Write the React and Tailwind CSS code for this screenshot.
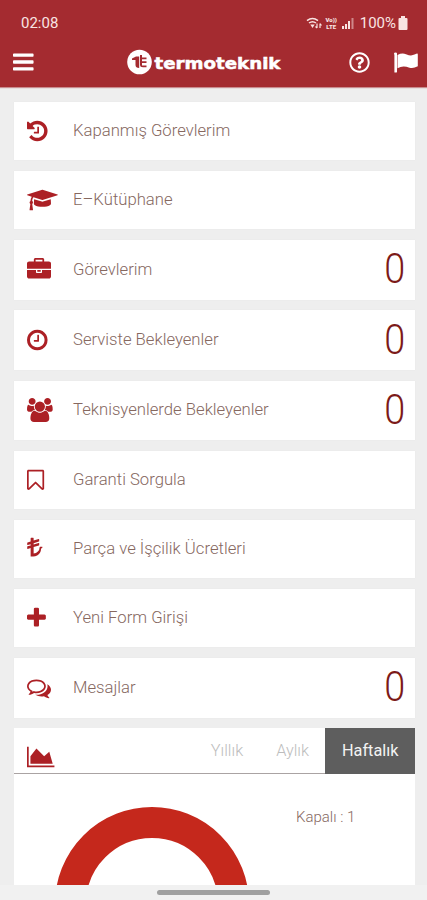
import React, { useState } from "react";
import { FaRegQuestionCircle } from "react-icons/fa";

// width is the glyph's advance, every icon is 1792 units high
const ICONS = {
  bars: {
    width: 1536,
    minX: 128,
    d: "M1664 1344v128q0 26-19 45t-45 19h-1408q-26 0-45-19t-19-45v-128q0-26 19-45t45-19h1408q26 0 45 19t19 45zm0-512v128q0 26-19 45t-45 19h-1408q-26 0-45-19t-19-45v-128q0-26 19-45t45-19h1408q26 0 45 19t19 45zm0-512v128q0 26-19 45t-45 19h-1408q-26 0-45-19t-19-45v-128q0-26 19-45t45-19h1408q26 0 45 19t19 45z",
  },
  history: {
    width: 1536,
    minX: 128,
    d: "M1664 896q0 156-61 298t-164 245-245 164-298 61q-172 0-327-72.5t-264-204.5q-7-10-6.5-22.5t8.5-20.5l137-138q10-9 25-9 16 2 23 12 73 95 179 147t225 52q104 0 198.5-40.5t163.5-109.5 109.5-163.5 40.5-198.5-40.5-198.5-109.5-163.5-163.5-109.5-198.5-40.5q-98 0-188 35.5t-160 101.5l137 138q31 30 14 69-17 40-59 40h-448q-26 0-45-19t-19-45v-448q0-42 40-59 39-17 69 14l130 129q107-101 244.5-156.5t284.5-55.5q156 0 298 61t245 164 164 245 61 298zm-640-288v448q0 14-9 23t-23 9h-320q-14 0-23-9t-9-23v-64q0-14 9-23t23-9h224v-352q0-14 9-23t23-9h64q14 0 23 9t9 23z",
  },
  graduation: {
    width: 2304,
    minX: 0,
    d: "M1774 836l18 316q4 69-82 128t-235 93.5-323 34.5-323-34.5-235-93.5-82-128l18-316 574 181q22 7 48 7t48-7zm530-324q0 23-22 31l-1120 352q-4 1-10 1t-10-1l-652-206q-43 34-71 111.5t-34 178.5q63 36 63 109 0 69-58 107l58 433q2 14-8 25-9 11-24 11h-192q-15 0-24-11-10-11-8-25l58-433q-58-38-58-107 0-73 65-111 11-207 98-330l-333-104q-22-8-22-31t22-31l1120-352q4-1 10-1t10 1l1120 352q22 8 22 31z",
  },
  briefcase: {
    width: 1792,
    minX: 0,
    d: "M640 256h512v-128h-512v128zm1152 640v480q0 66-47 113t-113 47h-1472q-66 0-113-47t-47-113v-480h672v160q0 26 19 45t45 19h320q26 0 45-19t19-45v-160h672zm-768 0v128h-256v-128h256zm768-480v384h-1792v-384q0-66 47-113t113-47h352v-160q0-40 28-68t68-28h576q40 0 68 28t28 68v160h352q66 0 113 47t47 113z",
  },
  clock: {
    width: 1536,
    minX: 128,
    d: "M1024 544v448q0 14-9 23t-23 9h-320q-14 0-23-9t-9-23v-64q0-14 9-23t23-9h224v-352q0-14 9-23t23-9h64q14 0 23 9t9 23zm416 352q0-148-73-273t-198-198-273-73-273 73-198 198-73 273 73 273 198 198 273 73 273-73 198-198 73-273zm224 0q0 209-103 385.5t-279.5 279.5-385.5 103-385.5-103-279.5-279.5-103-385.5 103-385.5 279.5-279.5 385.5-103 385.5 103 279.5 279.5 103 385.5z",
  },
  users: {
    width: 1920,
    minX: 0,
    d: "M593 896q-162 5-265 128h-134q-82 0-138-40.5t-56-118.5q0-353 124-353 6 0 43.5 21t97.5 42.5 119 21.5q67 0 133-23-5 37-5 66 0 139 81 256zm1071 637q0 120-73 189.5t-194 69.5h-874q-121 0-194-69.5t-73-189.5q0-53 3.5-103.5t14-109 26.5-108.5 43-97.5 62-81 85.5-53.5 111.5-20q10 0 43 21.5t73 48 107 48 135 21.5 135-21.5 107-48 73-48 43-21.5q61 0 111.5 20t85.5 53.5 62 81 43 97.5 26.5 108.5 14 109 3.5 103.5zm-1024-1277q0 106-75 181t-181 75-181-75-75-181 75-181 181-75 181 75 75 181zm704 384q0 159-112.5 271.5t-271.5 112.5-271.5-112.5-112.5-271.5 112.5-271.5 271.5-112.5 271.5 112.5 112.5 271.5zm576 225q0 78-56 118.5t-138 40.5h-134q-103-123-265-128 81-117 81-256 0-29-5-66 66 23 133 23 59 0 119-21.5t97.5-42.5 43.5-21q124 0 124 353zm-128-609q0 106-75 181t-181 75-181-75-75-181 75-181 181-75 181 75 75 181z",
  },
  bookmark: {
    width: 1280,
    minX: 256,
    d: "M1408 256h-1024v1242l423-406 89-85 89 85 423 406v-1242zm12-128q23 0 44 9 33 13 52.5 41t19.5 62v1289q0 34-19.5 62t-52.5 41q-19 8-44 8-48 0-83-32l-441-424-441 424q-36 33-83 33-23 0-44-9-33-13-52.5-41t-19.5-62v-1289q0-34 19.5-62t52.5-41q21-9 44-9h1048z",
  },
  lira: {
    width: 1152,
    minX: 80,
    d: "M1130 880q0 159-78 294t-213.5 213-294.5 78h-160q-14 0-23-9t-9-23v-611l-215 66q-3 1-9 1-10 0-19-6-13-10-13-26v-128q0-23 23-31l233-71v-93l-215 66q-3 1-9 1-10 0-19-6-13-10-13-26v-128q0-23 23-31l233-71v-250q0-14 9-23t23-9h160q14 0 23 9t9 23v181l375-116q15-5 28 5t13 26v128q0 23-23 31l-393 121v93l375-116q15-5 28 5t13 26v128q0 23-23 31l-393 121v487q188-13 318-151t130-328q0-14 9-23t23-9h160q14 0 23 9t9 23z",
  },
  plus: {
    width: 1408,
    minX: 192,
    d: "M1600 736v192q0 40-28 68t-68 28h-416v416q0 40-28 68t-68 28h-192q-40 0-68-28t-28-68v-416h-416q-40 0-68-28t-28-68v-192q0-40 28-68t68-28h416v-416q0-40 28-68t68-28h192q40 0 68 28t28 68v416h416q40 0 68 28t28 68z",
  },
  comments: {
    width: 1792,
    minX: 0,
    d: "M704 384q-153 0-286 52t-211.5 141-78.5 191q0 82 53 158t149 132l97 56-35 84q34-20 62-39l44-31 53 10q78 14 153 14 153 0 286-52t211.5-141 78.5-191-78.5-191-211.5-141-286-52zm0-128q191 0 353.5 68.5t256.5 186.5 94 257-94 257-256.5 186.5-353.5 68.5q-86 0-176-16-124 88-278 128-36 9-86 16h-3q-11 0-20.5-8t-11.5-21q-1-3-1-6.5t.5-6.5 2-6l2.5-5 3.5-5.5 4-5 4.5-5 4-4.5q5-6 23-25t26-29.5 22.5-29 25-38.5 20.5-44q-124-72-195-177t-71-224q0-139 94-257t256.5-186.5 353.5-68.5zm822 1169q10 24 20.5 44t25 38.5 22.5 29 26 29.5 23 25q1 1 4 4.5t4.5 5 4 5 3.5 5.5l2.5 5 2 6 .5 6.5-1 6.5q-3 14-13 22t-22 7q-50-7-86-16-154-40-278-128-90 16-176 16-271 0-472-132 58 4 88 4 161 0 309-45t264-129q125-92 192-212t67-254q0-77-23-152 129 71 204 178t75 230q0 120-71 224.5t-195 176.5z",
  },
  area: {
    width: 2048,
    minX: 0,
    d: "M2048 1536v128h-2048v-1536h128v1408h1920zm-384-1024l256 896h-1664v-576l448-576 576 576z",
  },
};

const Icon = ({ name, className = "" }) => {
  const { width, minX, d } = ICONS[name];
  return (
    <svg
      viewBox={`${minX} 0 ${width} 1792`}
      className={`h-6 w-auto shrink-0 overflow-visible ${className}`}
      fill="currentColor"
    >
      <path d={d} />
    </svg>
  );
};

const menuItems = [
  { icon: "history", label: "Kapanmış Görevlerim" },
  { icon: "graduation", label: "E–Kütüphane" },
  { icon: "briefcase", label: "Görevlerim", count: 0 },
  { icon: "clock", label: "Serviste Bekleyenler", count: 0 },
  { icon: "users", label: "Teknisyenlerde Bekleyenler", count: 0 },
  { icon: "bookmark", label: "Garanti Sorgula" },
  { icon: "lira", label: "Parça ve İşçilik Ücretleri" },
  { icon: "plus", label: "Yeni Form Girişi" },
  { icon: "comments", label: "Mesajlar", count: 0 },
];

const tabs = ["Yıllık", "Aylık", "Haftalık"];

const StatusBar = () => (
  <div className="flex h-[45px] items-center justify-between pl-[21px] pr-[19px] text-[#f9e4e2]">
    <span className="mt-px text-[15px]">02:08</span>
    <div className="flex items-center">
      {/* wifi */}
      <svg viewBox="0 0 16 12" className="h-3 w-4" fill="none" stroke="currentColor">
        <path d="M1 3.6Q6.500-.6 12 3.600M3 6Q6.500 3.300 10 6" strokeWidth="1.500" />
        <path d="M4.300 7.500L6.500 11 8.700 7.500Z" fill="currentColor" stroke="none" />
        <path d="M11 6.500v4.500M9.500 9.500l1.500 1.500M14 11V6.500M14 6.500L15.500 8.500" strokeWidth="1.200" />
      </svg>
      <div className="ml-[3px] flex w-[13px] flex-col items-center text-[6px] font-black leading-[7px]">
        <span>Vo))</span>
        <span>LTE</span>
      </div>
      {/* signal */}
      <svg viewBox="0 0 12 12" className="ml-1 h-3 w-3" fill="currentColor">
        <path d="M0 9h2v3H0zM3 7h2v5H3zM6 4h2v8H6z" />
        <path d="M9.500 1h2v11h-2z" opacity=".5" />
      </svg>
      <span className="ml-[6px] mt-px text-[15px]">100%</span>
      <svg viewBox="0 0 10 14" className="ml-[2px] h-[14px] w-[10px]" fill="currentColor">
        <path d="M3 0h4v2h1.500q1 0 1 1v10q0 1-1 1h-7q-1 0-1-1V3q0-1 1-1H3z" />
      </svg>
    </div>
  </div>
);

const Logo = () => (
  <svg viewBox="0 0 156 26" className="ml-[93px] h-[26px] w-[156px] shrink-0" fill="white">
    <circle cx="12.500" cy="13" r="12.300" />
    <g fill="#a42b30">
      <path d="M5 9.500L9 7.500h3.200v11.500q-3.700 0-3.700-3V11H5z" />
      <path d="M13 6h2v2.500h4.500v1.800H15v2h4.500v1.800H15v2.400h4.500v1.800H16q-3 0-3-2.500z" />
    </g>
    <text
      x="27.500"
      y="19.500"
      textLength="126"
      lengthAdjust="spacingAndGlyphs"
      stroke="white"
      strokeWidth=".5"
      className="font-['DejaVu_Sans',sans-serif] text-[15.5px] font-bold"
    >
      termoteknik
    </text>
  </svg>
);

const FlagIcon = () => (
  <svg viewBox="0 0 24 21" className="ml-6 h-[21px] w-6 shrink-0" fill="currentColor">
    <path d="M0 1.500Q0 .5 1.500.5T3 1.500V20q0 .5-1.500.5T.4 20V3z" />
    <path d="M3.500 3Q8 .6 12 2.200T18 3.300Q20.500 2.900 23 1.600 23.800 1.400 23.800 2.500V14.300Q19 17 15.500 15.700T9.500 14.500Q6.500 14.700 3.500 16.300z" />
  </svg>
);

const MenuCard = ({ item }) => {
  const hasCount = item.count !== undefined;
  return (
    <button
      className={`flex w-full items-center bg-white pl-[13px] pr-[10px] text-left shadow-[0_0_1px_rgba(0,0,0,0.05)] ${
        hasCount ? "h-[59.8px]" : "h-[58.5px]"
      }`}
    >
      <span className="flex w-[46px] shrink-0 text-[#ac2025]">
        <Icon name={item.icon} />
      </span>
      <span className="-mt-px flex-1 text-[16.7px] font-light text-[#86685f]">{item.label}</span>
      {hasCount && (
        <span className="-mt-px origin-right scale-x-90 text-[42px] font-light leading-none text-[#7c1a18]">
          {item.count}
        </span>
      )}
    </button>
  );
};

const App = () => {
  const [activeTab, setActiveTab] = useState("Haftalık");

  return (
    <div className="flex h-[900px] w-full flex-col overflow-hidden bg-[#eeeeee] font-[Roboto,sans-serif]">
      {/* Header */}
      <header className="h-[87px] shrink-0 bg-[#a42b30] shadow-[0_1px_1px_rgba(164,43,48,0.5)]">
        <StatusBar />
        <div className="flex h-[34px] items-center pl-[13px] pr-[9px] text-white">
          <Icon name="bars" />
          <Logo />
          <FaRegQuestionCircle className="ml-auto size-[21px]" />
          <FlagIcon />
        </div>
      </header>

      <main className="flex min-h-0 flex-1 flex-col gap-[10.5px] px-[14px] pr-3 pt-[15px]">
        {menuItems.map((item) => (
          <MenuCard key={item.icon} item={item} />
        ))}

        {/* Chart panel */}
        <section className="h-[157px] shrink-0 overflow-hidden bg-white">
          <div className="flex h-[46px] border-b border-[#aaa3a3]">
            <Icon name="area" className="ml-[13px] mt-[17px] text-[#ac2025]" />
            <div className="ml-auto flex h-[46px]">
              {tabs.map((tab) => (
                <button
                  key={tab}
                  onClick={() => setActiveTab(tab)}
                  className={`px-[16.5px] text-[16.3px] ${
                    activeTab === tab
                      ? "bg-[#5e5e5e] font-normal text-[#f3f3f3]"
                      : "font-light text-[#bdbdbd]"
                  }`}
                >
                  {tab}
                </button>
              ))}
            </div>
          </div>
          <div className="flex items-start">
            <svg viewBox="0 0 194 194" className="ml-[41px] mt-[33px] size-[194px]" fill="none">
              <circle cx="97" cy="97" r="81.500" stroke="#c5281c" strokeWidth="31" />
            </svg>
            <p className="ml-[47px] mt-[32px] text-[15px] font-light text-[#86685f]">Kapalı : 1</p>
          </div>
        </section>
      </main>

      {/* Gesture bar */}
      <footer className="flex h-[15px] shrink-0 justify-center bg-[#f1f1f1] pt-[5px]">
        <div className="h-[5px] w-[113px] rounded-full bg-[#a0a0a0]" />
      </footer>
    </div>
  );
};

export default App;
